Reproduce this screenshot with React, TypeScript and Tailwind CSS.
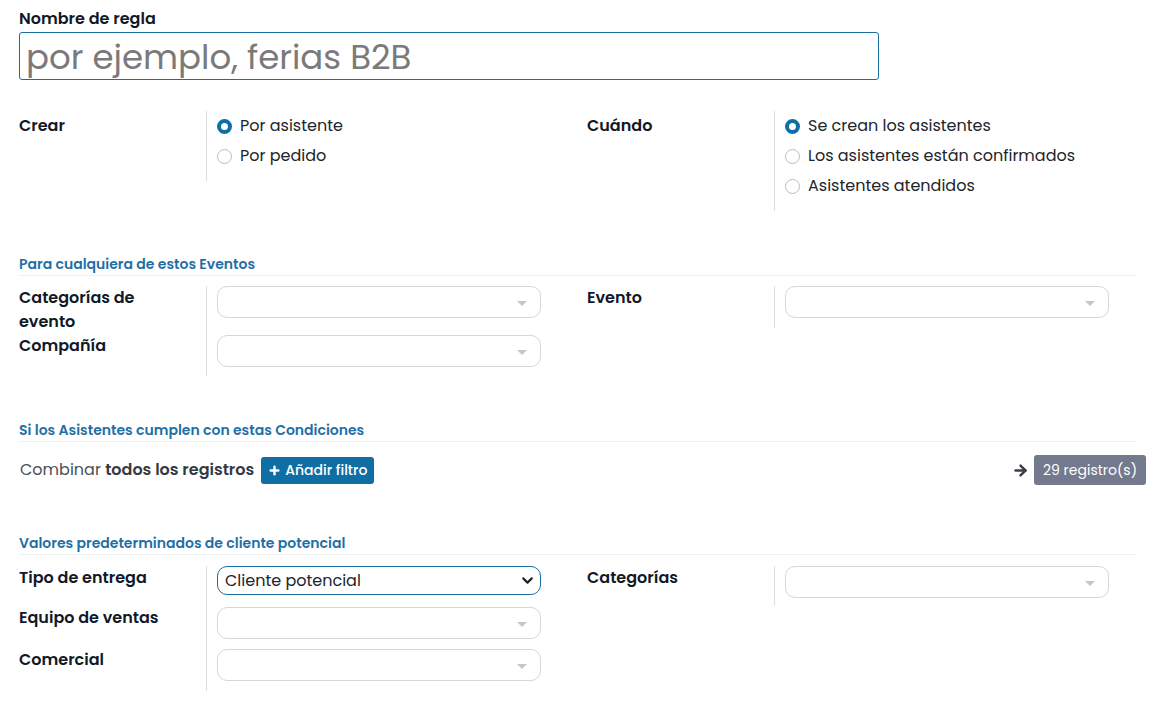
import { ArrowRight, ChevronDown, Plus } from "lucide-react";
import type { ReactNode } from "react";

const font = { fontFamily: "Poppins, 'Open Sans', 'Noto Sans', sans-serif" };

const Radio = ({ checked, label }: { checked?: boolean; label: string }) => (
  <label className="flex items-center gap-2 h-[30px] text-[16px] text-[#212529]">
    {checked ? (
      <span className="size-[15px] rounded-full border-[4px] border-[#0f6fa5] bg-white" />
    ) : (
      <span className="size-[15px] rounded-full border border-[#b9bcc0] bg-white" />
    )}
    <span>{label}</span>
  </label>
);

const EmptySelect = () => (
  <div className="relative h-[32px] w-[324px] rounded-[10px] border border-[#d4d6d9] bg-white">
    <span className="absolute right-[13px] top-[14px] border-x-[5px] border-t-[5px] border-x-transparent border-t-[#c4c6c9]" />
  </div>
);

const labelCls = "w-[187px] shrink-0 text-[16px] font-semibold leading-[24px] text-[#111827]";

const Field = ({ label, children }: { label: ReactNode; children: ReactNode }) => (
  <div className="flex">
    <div className={labelCls}>{label}</div>
    <div className="border-l border-[#dcdee1] pl-[10px]">{children}</div>
  </div>
);

const SectionTitle = ({ title }: { title: string }) => (
  <div className="border-b border-[#eef0f2] pb-[1px] text-[14px] font-semibold leading-[20px] text-[#1f6fa6]">{title}</div>
);

export default function App() {
  return (
    <div className="min-h-[712px] w-[1162px] bg-white pl-[19px] text-[#212529]" style={font}>
      <div className="w-[1117px]">
        <div className="pt-[7px] text-[16px] font-semibold leading-[24px] text-[#111827]">Nombre de regla</div>
        <div className="mt-[1px] flex h-[48px] w-[860px] items-center rounded-[3px] border border-[#1b6ea3] px-[6px] pt-[2px] text-[34px] text-[#7a7a7a]">
          por ejemplo, ferias B2B
        </div>

        <div className="mt-[31px] grid grid-cols-2 items-start gap-x-[19px]">
          <Field label={<div className="pt-[3px]">Crear</div>}>
            <div className="pb-[10px]">
              <Radio checked label="Por asistente" />
              <Radio label="Por pedido" />
            </div>
          </Field>
          <Field label={<div className="pt-[3px]">Cuándo</div>}>
            <div className="pb-[10px]">
              <Radio checked label="Se crean los asistentes" />
              <Radio label="Los asistentes están confirmados" />
              <Radio label="Asistentes atendidos" />
            </div>
          </Field>
        </div>

        <div className="mt-[43px]">
          <SectionTitle title="Para cualquiera de estos Eventos" />
        </div>
        <div className="mt-[10px] grid grid-cols-2 items-start gap-x-[19px]">
          <div className="flex">
            <div className={labelCls}>
              <div>
                Categorías de
                <br />
                evento
              </div>
              <div>Compañía</div>
            </div>
            <div className="flex flex-col gap-[17px] border-l border-[#dcdee1] pb-[9px] pl-[10px]">
              <EmptySelect />
              <EmptySelect />
            </div>
          </div>
          <Field label="Evento">
            <div className="pb-[10px]">
              <EmptySelect />
            </div>
          </Field>
        </div>

        <div className="mt-[44px]">
          <SectionTitle title="Si los Asistentes cumplen con estas Condiciones" />
        </div>
        <div className="mt-[13px] flex h-[30px] items-center">
          <div className="pl-[1px] text-[16px] text-[#495057]">
            Combinar <span className="font-semibold text-[#343a40]">todos los registros</span>
          </div>
          <button
            type="button"
            className="ml-[7px] flex h-[27px] items-center gap-[4px] rounded-[3px] bg-[#0f6fa5] px-[7px] text-[14px] font-medium text-white"
          >
            <Plus size={13} strokeWidth={4.5} />
            Añadir filtro
          </button>
          <div className="ml-auto mr-[-10px] flex items-center gap-[5px]">
            <ArrowRight size={17} strokeWidth={3.5} className="text-[#3b3f46]" />
            <span className="flex h-[30px] items-center rounded-[3px] bg-[#737a8d] px-[9px] text-[14px] text-white">
              29 registro(s)
            </span>
          </div>
        </div>

        <div className="mt-[48px]">
          <SectionTitle title="Valores predeterminados de cliente potencial" />
        </div>
        <div className="mt-[11px] grid grid-cols-2 items-start gap-x-[19px]">
          <div className="flex">
            <div className={labelCls}>
              <div className="h-[40px]">Tipo de entrega</div>
              <div className="h-[42px]">Equipo de ventas</div>
              <div>Comercial</div>
            </div>
            <div className="flex flex-col border-l border-[#dcdee1] pb-[10px] pl-[10px]">
              <div className="flex h-[29px] w-[324px] items-center justify-between rounded-[10px] border border-[#1b6ea3] pl-[7px] pr-[4px] text-[16px] text-[#212529]">
                <span>Cliente potencial</span>
                <ChevronDown size={17} strokeWidth={3} className="text-[#212529]" />
              </div>
              <div className="mt-[12px]">
                <EmptySelect />
              </div>
              <div className="mt-[10px]">
                <EmptySelect />
              </div>
            </div>
          </div>
          <Field label="Categorías">
            <div className="pb-[8px]">
              <EmptySelect />
            </div>
          </Field>
        </div>
      </div>
    </div>
  );
}
